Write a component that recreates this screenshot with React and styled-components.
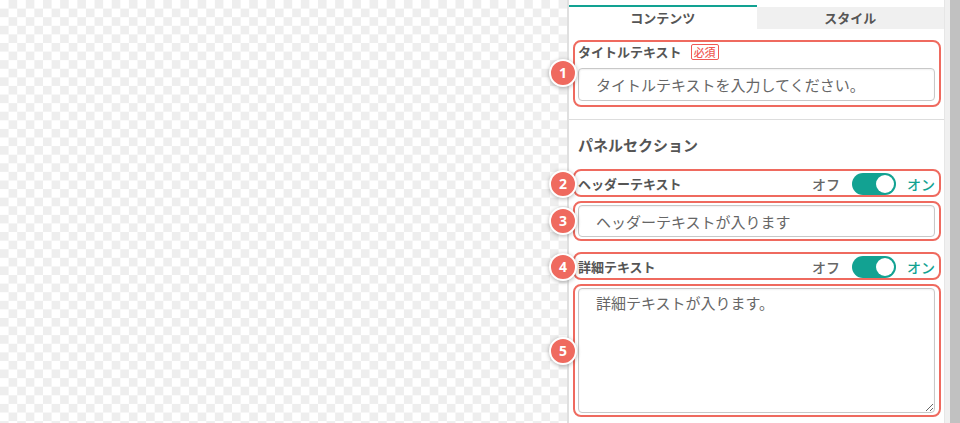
import React from "react";
import styled, { createGlobalStyle } from "styled-components";

const GlobalStyle = createGlobalStyle`
  html, body { margin: 0; padding: 0; }
  body {
    width: 960px;
    height: 423px;
    overflow: hidden;
    font-family: "Noto Sans CJK JP", "Noto Sans", sans-serif;
    color: #555;
  }
`;

const TEAL = "#12a292";
const RED = "#ef6a5f";

const Page = styled.div`
  display: flex;
  width: 960px;
  height: 423px;
  overflow: hidden;
`;

const Canvas = styled.div`
  flex: 0 0 567px;
  background: repeating-conic-gradient(#eeeeee 0 25%, #ffffff 0 50%) 0 0 / 17.2px 17.2px;
`;

const Panel = styled.div`
  flex: 0 0 375px;
  border-left: 2px solid #e0e0e0;
  background: #fff;
  padding-top: 5px;
  display: flex;
  flex-direction: column;
  position: relative;
`;

const Gutter = styled.div`
  flex: 1;
  background: #f0f0f0;
  border-left: 1px solid #e6e6e6;
  display: flex;
  justify-content: flex-end;
`;

const Thumb = styled.div`
  width: 10px;
  background: #c1c1c1;
`;

const TabBar = styled.div`
  display: flex;
  height: 24px;
`;

const Tab = styled.div`
  flex: 1;
  display: flex;
  align-items: center;
  justify-content: center;
  border-top: 2px solid ${(p) => (p.$active ? TEAL : "transparent")};
  background: ${(p) => (p.$active ? "#fff" : "#f0f0f0")};
  background-clip: padding-box;
  font-size: 13px;
  font-weight: 700;
  color: #555;
  line-height: 22px;
`;

const Section = styled.div`
  padding: 0 9px;
  display: flex;
  flex-direction: column;
`;

const Divider = styled.div`
  height: 1px;
  background: #dddddd;
  margin-top: ${(p) => p.$mt || 0}px;
`;

const AnnotWrap = styled.div`
  position: relative;
  margin-top: ${(p) => p.$mt || 0}px;
`;

const Outline = styled.div`
  position: absolute;
  inset: ${(p) => p.$inset};
  border: 2px solid ${RED};
  border-radius: 8px;
  pointer-events: none;
`;

const Marker = styled.div`
  position: absolute;
  left: -29px;
  top: 50%;
  transform: translateY(-50%);
  width: 24px;
  height: 24px;
  border: 2px solid #fff;
  border-radius: 50%;
  background: ${RED};
  color: #fff;
  font-family: "Noto Sans", sans-serif;
  font-size: 14px;
  font-weight: 700;
  display: flex;
  align-items: center;
  justify-content: center;
  box-shadow: 0 1px 4px rgba(0, 0, 0, 0.3);
  z-index: 2;
  line-height: 1;
`;

const Annotated = ({ n, inset, mt, children }) => (
  <AnnotWrap $mt={mt}>
    {children}
    <Outline $inset={inset} />
    <Marker>{n}</Marker>
  </AnnotWrap>
);

const LabelRow = styled.div`
  display: flex;
  align-items: center;
  height: 16px;
  margin-bottom: 8px;
`;

const Label = styled.span`
  font-size: 13px;
  font-weight: 700;
  color: #555;
  line-height: 16px;
`;

const Required = styled.span`
  margin-left: 9px;
  height: 16px;
  box-sizing: border-box;
  padding: 0 2px;
  border: 1px solid #f05a55;
  border-radius: 2px;
  color: #f05a55;
  font-size: 11px;
  line-height: 14px;
  font-weight: 500;
`;

const TextInput = styled.input`
  box-sizing: border-box;
  width: 100%;
  height: ${(p) => p.$h || 32}px;
  margin: 0;
  border: 1px solid #c8c8c8;
  border-radius: 4px;
  padding: 0 17px;
  font-family: inherit;
  font-size: 15px;
  color: #555;
  box-shadow: inset 0 1px 2px rgba(0, 0, 0, 0.06);
  outline: none;
  &::placeholder { color: #666; }
`;

const TextArea = styled.textarea`
  display: block;
  box-sizing: border-box;
  width: 100%;
  height: 125px;
  margin: 0;
  border: 1px solid #c8c8c8;
  border-radius: 4px;
  padding: 4px 17px;
  font-family: inherit;
  font-size: 15px;
  line-height: 20px;
  color: #555;
  resize: vertical;
  box-shadow: inset 0 1px 2px rgba(0, 0, 0, 0.06);
  outline: none;
  &::placeholder { color: #666; }
`;

const Heading = styled.h2`
  margin: 14px 0 0;
  font-size: 15px;
  font-weight: 700;
  line-height: 22px;
  color: #555;
`;

const ToggleRow = styled.div`
  display: flex;
  align-items: center;
  height: 22px;
`;

const Spacer = styled.div`
  flex: 1;
`;

const StateText = styled.span`
  font-size: 14px;
  font-weight: 500;
  color: ${(p) => (p.$on ? TEAL : "#666")};
  line-height: 22px;
`;

const Switch = styled.div`
  width: 44px;
  height: 22px;
  border-radius: 11px;
  background: ${TEAL};
  margin: 0 11px 0 12px;
  display: flex;
  align-items: center;
  justify-content: flex-end;
  padding: 0 2px;
  box-sizing: border-box;
`;

const Knob = styled.div`
  width: 18px;
  height: 18px;
  border-radius: 50%;
  background: #fff;
`;

const Toggle = ({ label }) => (
  <ToggleRow>
    <Label>{label}</Label>
    <Spacer />
    <StateText>オフ</StateText>
    <Switch>
      <Knob />
    </Switch>
    <StateText $on>オン</StateText>
  </ToggleRow>
);

export default function App() {
  return (
    <>
      <GlobalStyle />
      <Page>
        <Canvas />
        <Panel>
          <TabBar>
            <Tab $active>コンテンツ</Tab>
            <Tab>スタイル</Tab>
          </TabBar>
          <Section>
            <Annotated n="1" mt={15} inset="-4px -6px -6px -5px">
              <LabelRow>
                <Label>タイトルテキスト</Label>
                <Required>必須</Required>
              </LabelRow>
              <TextInput $h={33} placeholder="タイトルテキストを入力してください。" />
            </Annotated>
          </Section>
          <Divider $mt={18} />
          <Section>
            <Heading>パネルセクション</Heading>
            <Annotated n="2" mt={17} inset="-4px -6px -2px -5px">
              <Toggle label="ヘッダーテキスト" />
            </Annotated>
            <Annotated n="3" mt={10} inset="-4px -6px -4px -5px">
              <TextInput placeholder="ヘッダーテキストが入ります" />
            </Annotated>
            <Annotated n="4" mt={19} inset="-4px -6px -2px -5px">
              <Toggle label="詳細テキスト" />
            </Annotated>
            <Annotated n="5" mt={10} inset="-4px -6px -4px -5px">
              <TextArea placeholder="詳細テキストが入ります。" />
            </Annotated>
          </Section>
        </Panel>
        <Gutter>
          <Thumb />
        </Gutter>
      </Page>
    </>
  );
}
